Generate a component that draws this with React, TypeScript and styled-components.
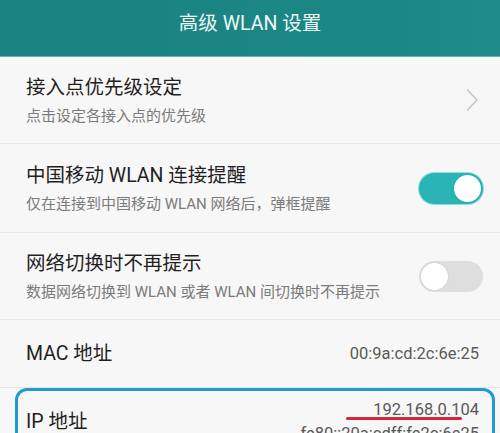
import styled, { createGlobalStyle } from "styled-components";

const GlobalStyle = createGlobalStyle`
  html, body {
    margin: 0;
    padding: 0;
    background: #f7f7f7;
    overflow: hidden;
  }
  body {
    font-family: Roboto, "Noto Sans CJK SC", sans-serif;
    -webkit-font-smoothing: antialiased;
  }
`;

const Screen = styled.div`
  width: 500px;
  height: 433px;
  overflow: hidden;
  background: #f7f7f7;
`;

const Header = styled.header`
  height: 57px;
  box-sizing: border-box;
  padding-bottom: 9px;
  background: linear-gradient(90deg, #1a827f 0%, #1b8784 70%, #1f8c89 100%);
  border-bottom: 1px solid #5fb5b2;
  display: flex;
  align-items: center;
  justify-content: center;
  color: #eef7f6;
  font-size: 19.5px;
  line-height: 48px;
`;

const Row = styled.div<{ $height: number }>`
  box-sizing: border-box;
  min-height: ${(p) => p.$height}px;
  padding: 0 21px 0 26px;
  display: flex;
  align-items: center;
  justify-content: space-between;
  border-bottom: 1px solid #e6e6e6;
`;

const HighlightRow = styled.div`
  box-sizing: border-box;
  margin: 0 5px 0 15px;
  padding: 7px 13px 7px 8px;
  display: flex;
  align-items: center;
  justify-content: space-between;
  border: 3px solid #1f9bd1;
  border-radius: 12px;
`;

const TextBlock = styled.div`
  display: flex;
  flex-direction: column;
`;

const Title = styled.div`
  font-size: 19.5px;
  line-height: 28px;
  color: #1f1f1f;
`;

const Subtitle = styled.div`
  margin-top: 3px;
  font-size: 15px;
  line-height: 22px;
  color: #7b7b7b;
`;

const Value = styled.div`
  font-size: 16.5px;
  line-height: 24px;
  color: #5a5a5a;
  text-align: right;
`;

const Marked = styled.span`
  position: relative;
  &::after {
    content: "";
    position: absolute;
    left: -27px;
    right: 17px;
    bottom: -1px;
    height: 3px;
    border-radius: 2px;
    background: #d3283b;
  }
`;

const Track = styled.div<{ $on: boolean }>`
  position: relative;
  width: 64px;
  height: 31px;
  border-radius: 16px;
  flex-shrink: 0;
  margin-right: -4px;
  background: ${(p) => (p.$on ? "#2bb4b5" : "#dedede")};
  box-shadow: ${(p) => (p.$on ? "0 0 0 1px #8fe0e0" : "none")};
`;

const Knob = styled.div<{ $on: boolean }>`
  position: absolute;
  top: 2px;
  left: ${(p) => (p.$on ? "35px" : "2px")};
  width: 27px;
  height: 27px;
  border-radius: 50%;
  background: #ffffff;
  box-shadow: 0 0 2px rgba(0, 0, 0, 0.12);
`;

const Chevron = () => (
  <svg width="14" height="24" viewBox="0 0 14 24" fill="none">
    <path d="M2 1.5 L12 12 L2 22.5" stroke="#c6c6c6" strokeWidth="1.6" />
  </svg>
);

const Toggle = ({ on }: { on: boolean }) => (
  <Track $on={on}>
    <Knob $on={on} />
  </Track>
);

export default function App() {
  return (
    <Screen>
      <GlobalStyle />
      <Header>高级 WLAN 设置</Header>

      <Row $height={87}>
        <TextBlock>
          <Title>接入点优先级设定</Title>
          <Subtitle>点击设定各接入点的优先级</Subtitle>
        </TextBlock>
        <Chevron />
      </Row>

      <Row $height={89}>
        <TextBlock>
          <Title>中国移动 WLAN 连接提醒</Title>
          <Subtitle>仅在连接到中国移动 WLAN 网络后，弹框提醒</Subtitle>
        </TextBlock>
        <Toggle on />
      </Row>

      <Row $height={87}>
        <TextBlock>
          <Title>网络切换时不再提示</Title>
          <Subtitle>数据网络切换到 WLAN 或者 WLAN 间切换时不再提示</Subtitle>
        </TextBlock>
        <Toggle on={false} />
      </Row>

      <Row $height={68}>
        <Title>MAC 地址</Title>
        <Value>00:9a:cd:2c:6e:25</Value>
      </Row>

      <HighlightRow>
        <Title>IP 地址</Title>
        <Value>
          <div>
            <Marked>192.168.0.104</Marked>
          </div>
          <div>fe80::20a:cdff:fe2c:6e25</div>
        </Value>
      </HighlightRow>
    </Screen>
  );
}
